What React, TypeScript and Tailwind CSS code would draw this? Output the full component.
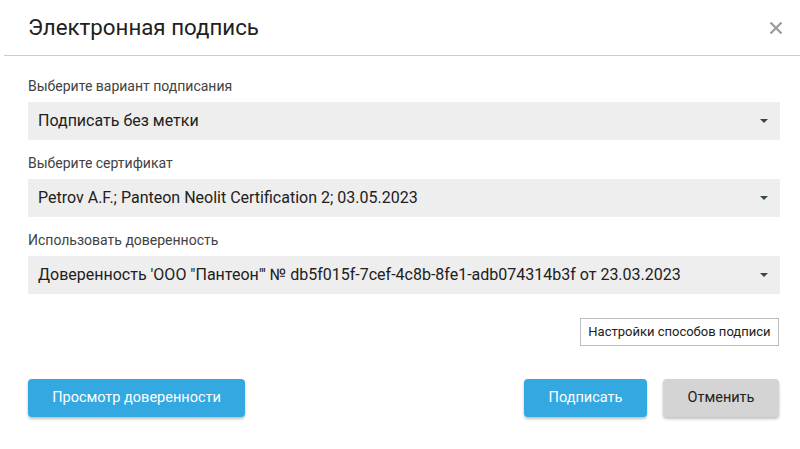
function Select({ value }: { value: string }) {
  return (
    <div className="flex h-[38px] items-center justify-between bg-[#eeeeee] pl-[10px] pr-[12px] text-[16px] text-[#212121]">
      <span className="whitespace-nowrap">{value}</span>
      <svg width="8" height="4" viewBox="0 0 8 4" className="text-[#37474f]">
        <path d="M0 0h8L4 4z" fill="currentColor" />
      </svg>
    </div>
  )
}

function Field({ label, value }: { label: string; value: string }) {
  return (
    <div className="flex flex-col">
      <label className="mb-[7px] text-[14px] leading-[17px] text-[#424242]">{label}</label>
      <Select value={value} />
    </div>
  )
}

export default function App() {
  return (
    <div className="h-[449px] w-[800px] bg-white font-['Roboto',sans-serif]">
      <div className="ml-[4px] flex h-[56px] items-center justify-between border-b border-[#cccccc] pl-[24px] pr-[16px]">
        <h1 className="text-[22.3px] font-normal text-[#212121]">Электронная подпись</h1>
        <button aria-label="Закрыть" className="flex h-[16px] w-[16px] items-center justify-center">
          <svg width="14" height="14" viewBox="0 0 14 14">
            <path d="M1.5 1.5l11 11M12.5 1.5l-11 11" stroke="#9e9e9e" strokeWidth="2.4" />
          </svg>
        </button>
      </div>

      <div className="flex flex-col gap-[15px] pl-[28px] pr-[20px] pt-[22px]">
        <Field label="Выберите вариант подписания" value="Подписать без метки" />
        <Field label="Выберите сертификат" value="Petrov A.F.; Panteon Neolit Certification 2; 03.05.2023" />
        <Field
          label="Использовать доверенность"
          value={'Доверенность \'ООО "Пантеон"\' № db5f015f-7cef-4c8b-8fe1-adb074314b3f от 23.03.2023'}
        />
      </div>

      <div className="mt-[24px] flex justify-end pr-[21px]">
        <button className="h-[28px] border border-[#bdbdbd] bg-white px-[7.5px] text-[13px] text-[#212121]">
          Настройки способов подписи
        </button>
      </div>

      <div className="mt-[33px] flex items-center justify-between pl-[28px] pr-[21px]">
        <button className="h-[38px] w-[217px] rounded-[4px] bg-[#34a9e1] text-[14.5px] font-normal text-white shadow-[0_2px_3px_rgba(0,0,0,0.25)]">
          Просмотр доверенности
        </button>
        <div className="flex gap-[16px]">
          <button className="h-[38px] w-[123px] rounded-[4px] bg-[#34a9e1] text-[14.5px] font-normal text-white shadow-[0_2px_3px_rgba(0,0,0,0.25)]">
            Подписать
          </button>
          <button className="h-[38px] w-[116px] rounded-[4px] bg-[#d4d4d4] text-[14.5px] font-normal text-[#212121] shadow-[0_2px_3px_rgba(0,0,0,0.25)]">
            Отменить
          </button>
        </div>
      </div>
    </div>
  )
}
